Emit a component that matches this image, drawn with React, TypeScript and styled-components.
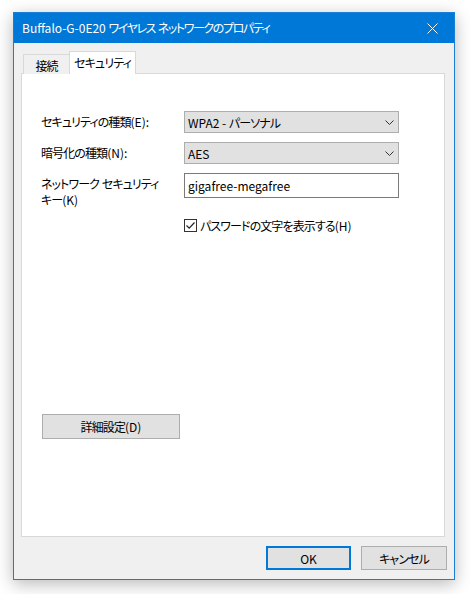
import React from "react";
import styled, { createGlobalStyle } from "styled-components";

const Global = createGlobalStyle`
  html, body { margin: 0; padding: 0; background: #ffffff; }
  body {
    font-family: "Noto Sans CJK JP", "Noto Sans", sans-serif;
    font-size: 12px;
    color: #000;
    font-feature-settings: "palt";
  }
`;

const Jp = styled.span<{ $tight?: boolean }>`
  letter-spacing: ${(p) => (p.$tight ? "-1.4px" : "-0.9px")};
`;

const Page = styled.div`
  padding: 12px 0 0 13px;
  width: 470px;
  height: 594px;
  box-sizing: border-box;
`;

const Window = styled.div`
  width: 442px;
  height: 568px;
  box-sizing: border-box;
  border: 1px solid #1a7ed6;
  background: #f0f0f0;
  display: flex;
  flex-direction: column;
  box-shadow: 0 4px 16px rgba(0, 0, 0, 0.28);
`;

const TitleBar = styled.div`
  height: 30px;
  background: #0078d7;
  color: #fff;
  display: flex;
  align-items: center;
  justify-content: space-between;
  padding: 0 0 0 8px;
  flex: none;
`;

const TitleText = styled.span`
  font-size: 12px;
  white-space: pre;
  padding-bottom: 1px;
`;

const CloseBox = styled.div`
  width: 46px;
  height: 30px;
  display: flex;
  align-items: center;
  justify-content: center;
  margin-right: -1px;
`;

const Body = styled.div`
  flex: 1;
  display: flex;
  flex-direction: column;
  padding: 8px 9px 9px 7px;
`;

const TabStrip = styled.div`
  display: flex;
  align-items: flex-end;
  height: 23px;
  margin-left: 2px;
  position: relative;
  z-index: 2;
`;

const Tab = styled.div<{ $active?: boolean; $w: number }>`
  box-sizing: border-box;
  width: ${(p) => p.$w}px;
  height: ${(p) => (p.$active ? 23 : 20)}px;
  border: 1px solid #d9d9d9;
  border-bottom: none;
  ${(p) => (p.$active ? "" : "border-right: none;")}
  background: ${(p) => (p.$active ? "#ffffff" : "#f0f0f0")};
  display: flex;
  align-items: ${(p) => (p.$active ? "flex-start" : "center")};
  justify-content: center;
  padding-top: ${(p) => (p.$active ? 2 : 1)}px;
  font-size: 12px;
  white-space: nowrap;
`;

const Panel = styled.div`
  box-sizing: border-box;
  height: 464px;
  margin-top: -1px;
  background: #fff;
  border: 1px solid #d9d9d9;
  display: flex;
  flex-direction: column;
  padding: 37px 0 0 19px;
`;

const FormGrid = styled.div`
  display: grid;
  grid-template-columns: 143px 215px;
  row-gap: 9px;
`;

const Label = styled.div<{ $center?: boolean }>`
  box-sizing: border-box;
  font-size: 12px;
  line-height: 16px;
  white-space: pre;
  display: flex;
  flex-direction: column;
  justify-content: ${(p) => (p.$center ? "center" : "flex-start")};
  padding-top: ${(p) => (p.$center ? 0 : 3)}px;
  max-height: 25px;
  overflow: visible;
`;

const Combo = styled.div`
  box-sizing: border-box;
  height: 22px;
  background: #e1e1e1;
  border: 1px solid #adadad;
  display: flex;
  align-items: center;
  justify-content: space-between;
  padding: 0 4px 0 3px;
  white-space: pre;
`;

const TextInput = styled.div`
  box-sizing: border-box;
  height: 25px;
  background: #fff;
  border: 1px solid #7a7a7a;
  display: flex;
  align-items: center;
  padding: 0 3px 1px;
`;

const CheckRow = styled.div`
  grid-column: 2;
  display: flex;
  align-items: center;
  gap: 3px;
  margin-top: 10px;
  white-space: nowrap;
`;

const CheckBox = styled.div`
  box-sizing: border-box;
  width: 13px;
  height: 13px;
  border: 1px solid #333;
  background: #fff;
  display: flex;
  align-items: center;
  justify-content: center;
`;

const Spacer = styled.div`
  flex: 1;
`;

const Button = styled.div<{ $primary?: boolean; $w: number; $h?: number }>`
  box-sizing: border-box;
  width: ${(p) => p.$w}px;
  height: ${(p) => p.$h ?? 24}px;
  background: #e1e1e1;
  border: ${(p) => (p.$primary ? "2px solid #0078d7" : "1px solid #adadad")};
  display: flex;
  align-items: center;
  justify-content: center;
  font-size: 12px;
  white-space: nowrap;
`;

const DetailWrap = styled.div`
  margin: 0 0 97px 1px;
`;

const ButtonRow = styled.div`
  display: flex;
  justify-content: flex-end;
  gap: 10px;
  margin-top: 9px;
  margin-right: -2px;
`;

const Chevron = () => (
  <svg width="9" height="5" viewBox="0 0 9 5">
    <path d="M0.5 0.5 L4.5 4.5 L8.5 0.5" fill="none" stroke="#333" strokeWidth="1" />
  </svg>
);

const Check = () => (
  <svg width="11" height="11" viewBox="0 0 11 11">
    <path d="M1.5 5.5 L4.2 8.2 L9.5 2.5" fill="none" stroke="#222" strokeWidth="1.2" />
  </svg>
);

const CloseIcon = () => (
  <svg width="11" height="11" viewBox="0 0 11 11">
    <path d="M0.5 0.5 L10.5 10.5 M10.5 0.5 L0.5 10.5" stroke="#fff" strokeWidth="1" />
  </svg>
);

export default function App() {
  return (
    <Page>
      <Global />
      <Window>
        <TitleBar>
          <TitleText>
            Buffalo-G-0E20 <Jp $tight>ワイヤレス</Jp> <Jp $tight>ネットワークのプロパティ</Jp>
          </TitleText>
          <CloseBox>
            <CloseIcon />
          </CloseBox>
        </TitleBar>
        <Body>
          <TabStrip>
            <Tab $w={46}>
              <Jp>接続</Jp>
            </Tab>
            <Tab $w={67} $active>
              <Jp>セキュリティ</Jp>
            </Tab>
          </TabStrip>
          <Panel>
            <FormGrid>
              <Label $center>
                <span>
                  <Jp>セキュリティの種類</Jp>(E):
                </span>
              </Label>
              <Combo>
                <span>
                  WPA2 - <Jp>パーソナル</Jp>
                </span>
                <Chevron />
              </Combo>
              <Label $center>
                <span>
                  <Jp>暗号化の種類</Jp>(N):
                </span>
              </Label>
              <Combo>
                <span>AES</span>
                <Chevron />
              </Combo>
              <Label>
                <span>
                  <Jp>ネットワーク</Jp> <Jp>セキュリティ</Jp>
                </span>
                <span>
                  <Jp>キー</Jp>(K)
                </span>
              </Label>
              <TextInput>gigafree-megafree</TextInput>
              <CheckRow>
                <CheckBox>
                  <Check />
                </CheckBox>
                <span>
                  <Jp>パスワードの文字を表示する</Jp>(H)
                </span>
              </CheckRow>
            </FormGrid>
            <Spacer />
            <DetailWrap>
              <Button $w={138} $h={25}>
                <span>
                  <Jp>詳細設定</Jp>(D)
                </span>
              </Button>
            </DetailWrap>
          </Panel>
          <ButtonRow>
            <Button $w={85} $primary>
              OK
            </Button>
            <Button $w={86}>
              <Jp>キャンセル</Jp>
            </Button>
          </ButtonRow>
        </Body>
      </Window>
    </Page>
  );
}
